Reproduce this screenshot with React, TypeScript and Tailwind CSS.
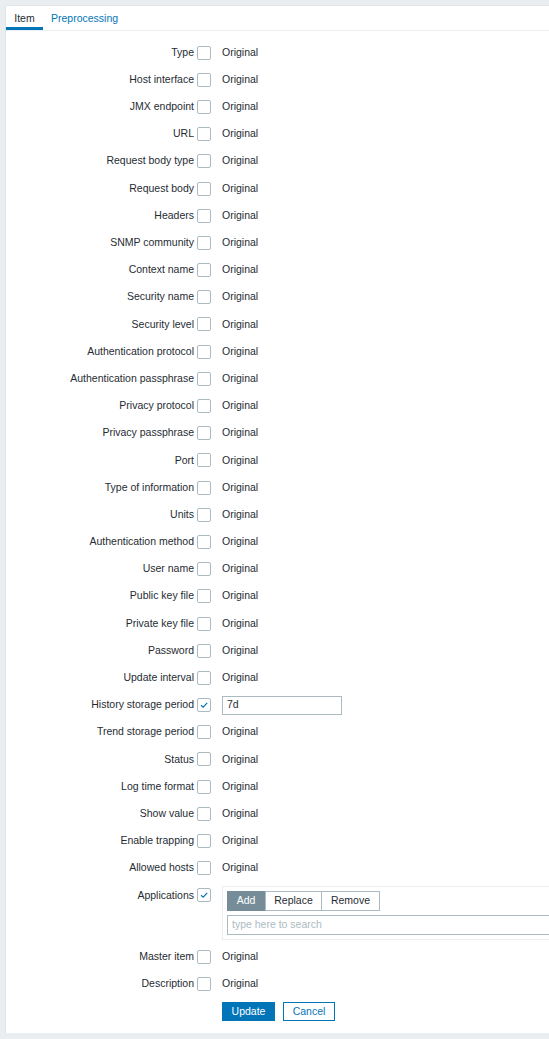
import React from "react";

const rowsA = [
  "Type",
  "Host interface",
  "JMX endpoint",
  "URL",
  "Request body type",
  "Request body",
  "Headers",
  "SNMP community",
  "Context name",
  "Security name",
  "Security level",
  "Authentication protocol",
  "Authentication passphrase",
  "Privacy protocol",
  "Privacy passphrase",
  "Port",
  "Type of information",
  "Units",
  "Authentication method",
  "User name",
  "Public key file",
  "Private key file",
  "Password",
  "Update interval",
];

const rowsB = [
  "Trend storage period",
  "Status",
  "Log time format",
  "Show value",
  "Enable trapping",
  "Allowed hosts",
];

function Check({ checked }: { checked?: boolean }) {
  return (
    <span className="ml-[3px] flex h-[14px] w-[14px] shrink-0 items-center justify-center rounded-[2px] border border-[#acbbc2] bg-white">
      {checked && (
        <svg width="10" height="10" viewBox="0 0 10 10">
          <path d="M2 5.2 L4.2 7.2 L8.2 2.8" fill="none" stroke="#0275b8" strokeWidth="1.2" />
        </svg>
      )}
    </span>
  );
}

function Label({ text, checked }: { text: string; checked?: boolean }) {
  return (
    <div className="flex h-[27.2px] shrink-0 items-center">
      <div className="w-[188px] text-right">{text}</div>
      <Check checked={checked} />
    </div>
  );
}

function Row({ label }: { label: string }) {
  return (
    <div className="flex h-[27.2px] items-center">
      <Label text={label} />
      <span className="ml-[11px]">Original</span>
    </div>
  );
}

export default function App() {
  return (
    <div
      className="min-h-[1039px] w-[549px] overflow-hidden bg-[#ebeef0] pt-[5px] pl-[5px] text-[10.5px] text-[#1f2c33]"
      style={{ fontFamily: '"Liberation Sans", Arial, sans-serif' }}
    >
      <div className="w-[620px] border-t border-l border-[#dfe4e7] bg-white pb-[8px]">
        <div className="flex h-[25px] items-stretch border-b border-[#ebeef0]">
          <div className="flex w-[37px] items-center justify-center border-b-[3px] border-[#0275b8] pt-[4px]">Item</div>
          <div className="flex items-center pl-[8px] pt-[1px] text-[#0275b8]">Preprocessing</div>
        </div>
        <div className="pt-[8px]">
          {rowsA.map((r) => (
            <Row key={r} label={r} />
          ))}
          <div className="flex h-[27.2px] items-center">
            <Label text="History storage period" checked />
            <div className="ml-[11px] flex h-[19px] w-[120px] items-center border border-[#acbbc2] px-[4px]">7d</div>
          </div>
          {rowsB.map((r) => (
            <Row key={r} label={r} />
          ))}
          <div className="flex items-start">
            <Label text="Applications" checked />
            <div className="mt-[4.4px] mb-[3.3px] ml-[11px] w-[380px] border border-[#ebeef0] p-[4px]">
              <div className="flex h-[20px]">
                <span className="flex w-[38px] items-center justify-center border border-[#768d99] bg-[#768d99] text-white">Add</span>
                <span className="flex w-[57px] items-center justify-center border border-[#acbbc2]">Replace</span>
                <span className="flex w-[58px] items-center justify-center border border-l-0 border-[#acbbc2]">Remove</span>
              </div>
              <div className="mt-[4px] flex h-[20px] items-center border border-[#acbbc2] px-[4px] text-[#acbbc2]">type here to search</div>
            </div>
          </div>
          <Row label="Master item" />
          <Row label="Description" />
          <div className="flex h-[27.2px] items-center pl-[216px]">
            <span className="flex h-[19px] w-[53px] items-center justify-center bg-[#0275b8] text-white">Update</span>
            <span className="ml-[8px] flex h-[19px] w-[52px] items-center justify-center border border-[#0275b8] text-[#0275b8]">Cancel</span>
          </div>
        </div>
      </div>
    </div>
  );
}
